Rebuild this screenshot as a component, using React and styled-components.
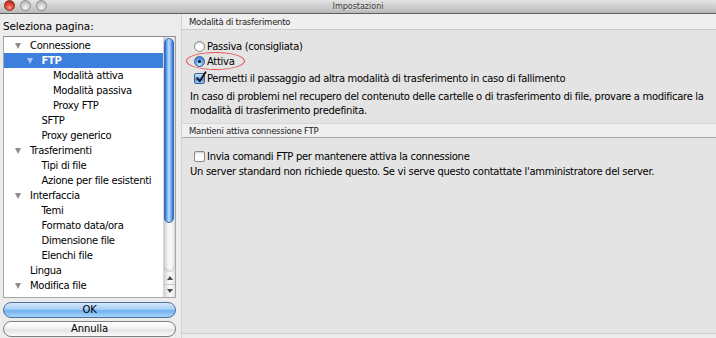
import React from 'react';
import styled, { createGlobalStyle, css } from 'styled-components';

const GlobalStyle = createGlobalStyle`
  html, body { margin: 0; padding: 0; background: #ececec; }
  body {
    font-family: "DejaVu Sans", "Noto Sans", sans-serif;
    font-size: 10px;
    letter-spacing: -0.3px;
    color: #000;
  }
  *, *::before, *::after { box-sizing: border-box; }
`;

const Window = styled.div`
  width: 716px;
  height: 338px;
  display: flex;
  flex-direction: column;
  overflow: hidden;
  background: #ececec;
`;

const TitleBar = styled.div`
  height: 14px;
  flex: none;
  display: grid;
  grid-template-columns: 1fr auto 1fr;
  align-items: center;
  background: linear-gradient(#e4e4e4, #cdcdcd 55%, #b9b9b9);
  border-bottom: 1px solid #5e5e5e;
`;

const Lights = styled.div`
  display: flex;
  gap: 5px;
  padding-left: 4px;
  align-self: start;
`;

const Light = styled.span`
  width: 11px;
  height: 11px;
  border-radius: 50%;
  ${p => p.$red
    ? css`
      background: radial-gradient(circle at 50% 75%, #ff9b8a 0, #e0453a 45%, #a3211a 100%);
      border: 1px solid #8a2820;`
    : css`
      background: radial-gradient(circle at 50% 75%, #f7f7f7 0, #d4d4d4 45%, #a8a8a8 100%);
      border: 1px solid #8e8e8e;`}
`;

const Title = styled.div`
  font-size: 8px;
  letter-spacing: 0;
  color: #3a3a3a;
  text-shadow: 0 1px 0 rgba(255, 255, 255, 0.45);
`;

const Body = styled.div`
  flex: 1;
  display: flex;
  min-height: 0;
`;

const Sidebar = styled.aside`
  width: 181px;
  flex: none;
  display: flex;
  flex-direction: column;
  padding: 0 5px 0 3px;
`;

const SideLabel = styled.div`
  height: 22px;
  padding-top: 6px;
  font-size: 10.5px;
  letter-spacing: -0.15px;
  line-height: 12px;
`;

const ListBox = styled.div`
  height: 262px;
  flex: none;
  display: flex;
  background: #fff;
  border: 1px solid #a6a6a6;
  border-top-color: #8c8c8c;
  overflow: hidden;
`;

const Rows = styled.div`
  flex: 1;
  padding-top: 1px;
  overflow: hidden;
`;

const Row = styled.div`
  height: 15px;
  display: flex;
  align-items: center;
  white-space: nowrap;
  padding-left: ${p => 11 + p.$level * 11.5}px;
  ${p => p.$selected && css`
    background: #3d7fdc;
    color: #fff;
    font-weight: bold;
  `}
`;

const Disclosure = styled.span`
  width: 15px;
  flex: none;
  display: flex;
  align-items: center;
`;

const Triangle = styled.span`
  width: 0;
  height: 0;
  border-left: 3.5px solid transparent;
  border-right: 3.5px solid transparent;
  border-top: 6px solid ${p => (p.$light ? '#a9c8f2' : '#8c8c8c')};
`;

const Scroll = styled.div`
  width: 12px;
  flex: none;
  display: flex;
  flex-direction: column;
  background: linear-gradient(to right, #d2d2d2, #f1f1f1 35%, #fbfbfb 60%, #e2e2e2);
  border-left: 1px solid #d6d6d6;
`;

const Track = styled.div`
  flex: 1;
  display: flex;
  flex-direction: column;
  border-bottom-left-radius: 6px;
  border-bottom-right-radius: 6px;
  box-shadow: inset 0 -2px 2px rgba(0, 0, 0, 0.12);
`;

const Thumb = styled.div`
  height: 185px;
  margin: 1px 1px 0 0;
  border-radius: 6px;
  background: linear-gradient(to right, #2b65c8, #6aa5f0 22%, #bcdcfd 48%, #7cb6f6 72%, #2f6cd0);
  border: 1px solid #3c69b4;
`;

const Arrows = styled.div`
  height: 25px;
  display: flex;
  flex-direction: column;
`;

const ArrowButton = styled.div`
  flex: 1;
  display: flex;
  align-items: center;
  justify-content: center;
  & + & { border-top: 1px solid #c9c9c9; }
`;

const ArrowGlyph = styled.span`
  width: 0;
  height: 0;
  border-left: 3px solid transparent;
  border-right: 3px solid transparent;
  ${p => p.$up
    ? css`border-bottom: 4px solid #4a4a4a;`
    : css`border-top: 4px solid #4a4a4a;`}
`;

const Buttons = styled.div`
  display: flex;
  flex-direction: column;
  gap: 3px;
  margin-top: 4px;
`;

const PushButton = styled.button`
  height: 16px;
  padding: 0;
  border-radius: 8px;
  font: inherit;
  font-size: 10px;
  letter-spacing: -0.1px;
  color: #000;
  line-height: 14px;
  ${p => p.$primary
    ? css`
      border: 1px solid #4f6f9c;
      background: linear-gradient(#d7eafc, #a5cdf6 45%, #6fb0f0 55%, #a9d5fb);`
    : css`
      border: 1px solid #7e7e7e;
      background: linear-gradient(#ffffff, #f3f3f3 45%, #e4e4e4 55%, #fafafa);`}
`;

const Main = styled.main`
  flex: 1;
  min-width: 0;
  display: flex;
  flex-direction: column;
  border-left: 1px solid #d2d2d2;
  padding-bottom: 4px;
`;

const SectionHeader = styled.div`
  flex: none;
  display: flex;
  align-items: center;
  padding-left: 7px;
  font-size: 8.5px;
  letter-spacing: -0.25px;
  color: #1c1c1c;
  background: #efefef;
  ${p => p.$first
    ? css`
      height: 16px;
      border-bottom: 1px solid #cbcbcb;`
    : css`
      height: 15px;
      border-top: 1px solid #d6d6d6;
      border-bottom: 1px solid #a9a9a9;`}
`;

const Section = styled.section`
  background: #e4e4e4;
  padding: ${p => (p.$first ? '9px' : '11px')} 0 0 8px;
  overflow: hidden;
  ${p => p.$first
    ? css`height: 93px; flex: none;`
    : css`flex: 1; border-bottom: 1px solid #cfcfcf;`}
`;

const Option = styled.label`
  position: relative;
  height: 15px;
  display: flex;
  align-items: center;
  gap: 2px;
  margin-left: 4px;
  margin-top: ${p => p.$mt || 0}px;
  white-space: nowrap;
`;

const RadioDot = styled.span`
  width: 11px;
  height: 11px;
  flex: none;
  border-radius: 50%;
  display: flex;
  align-items: center;
  justify-content: center;
  ${p => p.$on
    ? css`
      border: 1px solid #3b5f93;
      background: radial-gradient(circle at 50% 80%, #cde6ff 0, #6aaaf0 45%, #2f6fcc 100%);
      &::after {
        content: '';
        width: 3px;
        height: 3px;
        border-radius: 50%;
        background: #111;
      }`
    : css`
      border: 1px solid #8a8a8a;
      background: linear-gradient(#f4f4f4, #ffffff 60%, #fafafa);
      box-shadow: inset 0 1px 1px rgba(0, 0, 0, 0.15);`}
`;

const CheckBox = styled.span`
  position: relative;
  width: 11px;
  height: 11px;
  flex: none;
  border-radius: 2px;
  ${p => p.$on
    ? css`
      border: 1px solid #3b5f93;
      background: linear-gradient(#cde6ff, #7db5f2 45%, #4a8ce4 55%, #9fcdf9);`
    : css`
      border: 1px solid #8a8a8a;
      background: linear-gradient(#f2f2f2, #ffffff 60%, #fafafa);
      box-shadow: inset 0 1px 1px rgba(0, 0, 0, 0.12);`}
  & svg {
    position: absolute;
    left: 0;
    top: -3px;
  }
`;

const Annotation = styled.span`
  position: absolute;
  left: -8px;
  top: -2px;
  width: 59px;
  height: 18px;
  border: 1.4px solid #e5504c;
  border-radius: 50%;
  pointer-events: none;
`;

const Paragraph = styled.p`
  margin: ${p => p.$mt || 0}px 0 0;
  line-height: 14px;
  white-space: nowrap;
`;

const tree = [
  { label: 'Connessione', level: 0, arrow: true },
  { label: 'FTP', level: 1, arrow: true, selected: true },
  { label: 'Modalità attiva', level: 2 },
  { label: 'Modalità passiva', level: 2 },
  { label: 'Proxy FTP', level: 2 },
  { label: 'SFTP', level: 1 },
  { label: 'Proxy generico', level: 1 },
  { label: 'Trasferimenti', level: 0, arrow: true },
  { label: 'Tipi di file', level: 1 },
  { label: 'Azione per file esistenti', level: 1 },
  { label: 'Interfaccia', level: 0, arrow: true },
  { label: 'Temi', level: 1 },
  { label: 'Formato data/ora', level: 1 },
  { label: 'Dimensione file', level: 1 },
  { label: 'Elenchi file', level: 1 },
  { label: 'Lingua', level: 0 },
  { label: 'Modifica file', level: 0, arrow: true },
];

const Check = () => (
  <svg width="13" height="13" viewBox="0 0 13 13">
    <path d="M2.2 7.2 L4.8 10.2 L10.5 1.2" fill="none" stroke="#111" strokeWidth="1.8" strokeLinecap="round" strokeLinejoin="round" />
  </svg>
);

export default function App() {
  return (
    <>
      <GlobalStyle />
      <Window>
        <TitleBar>
          <Lights>
            <Light $red />
            <Light />
            <Light />
          </Lights>
          <Title>Impostazioni</Title>
          <span />
        </TitleBar>
        <Body>
          <Sidebar>
            <SideLabel>Seleziona pagina:</SideLabel>
            <ListBox>
              <Rows>
                {tree.map(item => (
                  <Row key={item.label} $level={item.level} $selected={item.selected}>
                    <Disclosure>
                      {item.arrow && <Triangle $light={item.selected} />}
                    </Disclosure>
                    {item.label}
                  </Row>
                ))}
              </Rows>
              <Scroll>
                <Track>
                  <Thumb />
                </Track>
                <Arrows>
                  <ArrowButton><ArrowGlyph $up /></ArrowButton>
                  <ArrowButton><ArrowGlyph /></ArrowButton>
                </Arrows>
              </Scroll>
            </ListBox>
            <Buttons>
              <PushButton $primary>OK</PushButton>
              <PushButton>Annulla</PushButton>
            </Buttons>
          </Sidebar>
          <Main>
            <SectionHeader $first>Modalità di trasferimento</SectionHeader>
            <Section $first>
              <Option>
                <RadioDot />
                Passiva (consigliata)
              </Option>
              <Option>
                <RadioDot $on />
                Attiva
                <Annotation />
              </Option>
              <Option $mt={2}>
                <CheckBox $on><Check /></CheckBox>
                Permetti il passaggio ad altra modalità di trasferimento in caso di fallimento
              </Option>
              <Paragraph $mt={4}>
                In caso di problemi nel recupero del contenuto delle cartelle o di trasferimento di file, provare a modificare la
                <br />
                modalità di trasferimento predefinita.
              </Paragraph>
            </Section>
            <SectionHeader>Mantieni attiva connessione FTP</SectionHeader>
            <Section>
              <Option>
                <CheckBox />
                Invia comandi FTP per mantenere attiva la connessione
              </Option>
              <Paragraph $mt={1}>
                Un server standard non richiede questo. Se vi serve questo contattate l'amministratore del server.
              </Paragraph>
            </Section>
          </Main>
        </Body>
      </Window>
    </>
  );
}
